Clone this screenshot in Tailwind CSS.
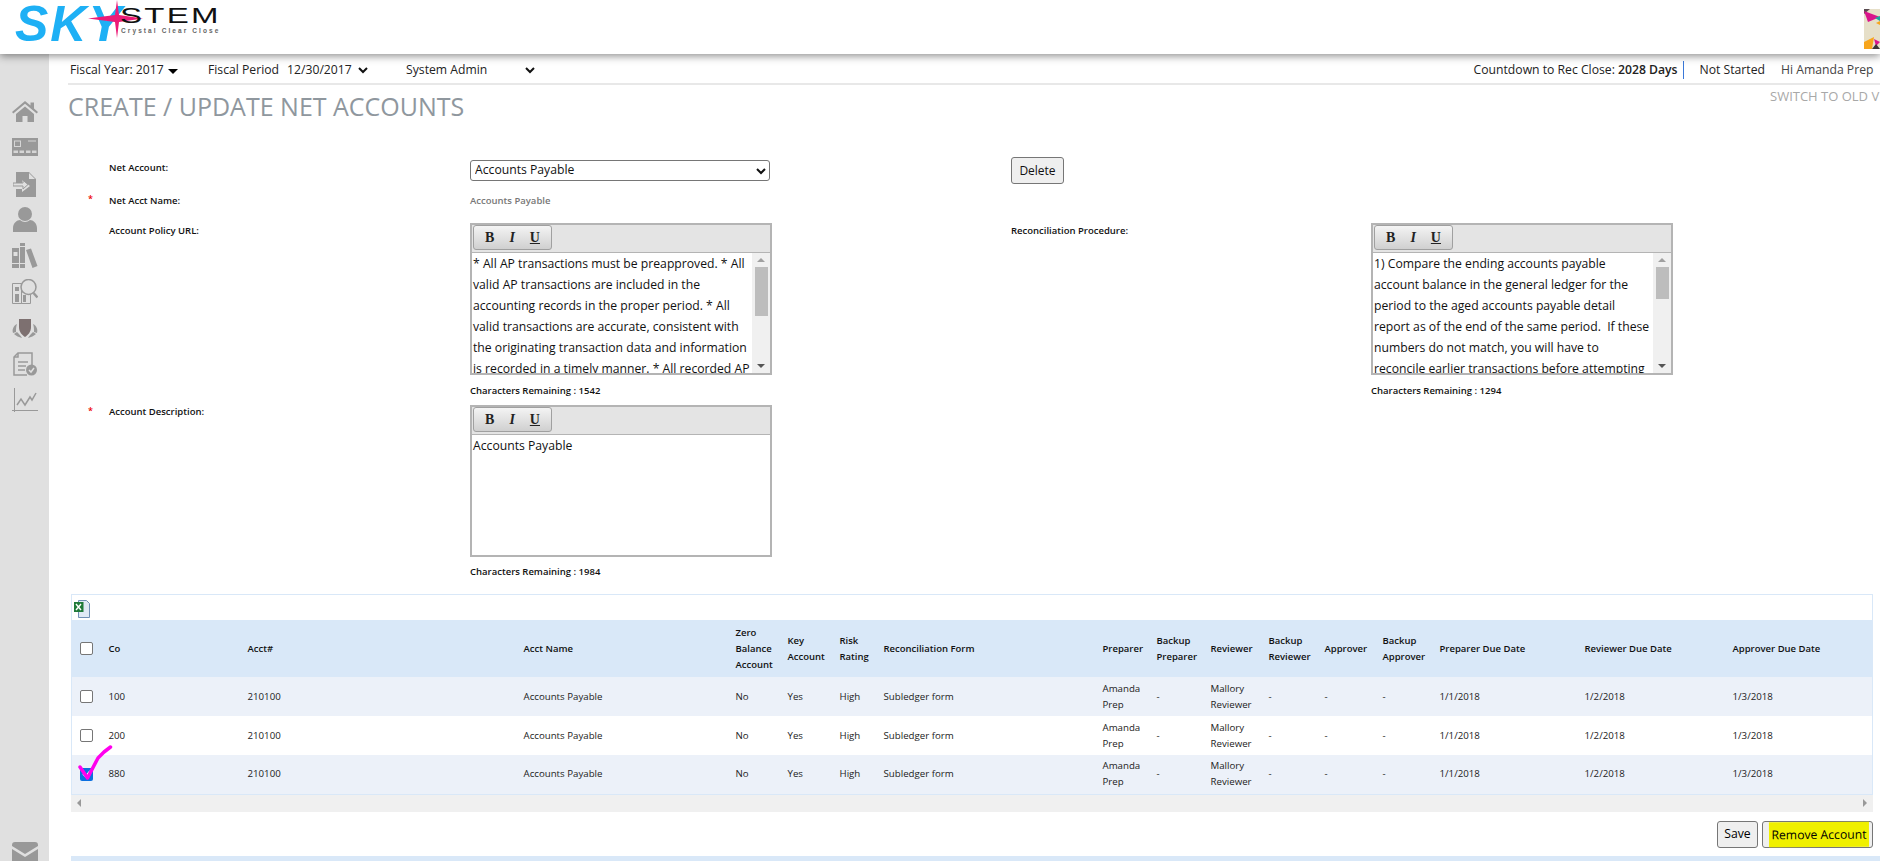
<!DOCTYPE html>
<html lang="en">
<head>
<meta charset="UTF-8">
<title>Create / Update Net Accounts</title>
<script src="https://cdn.jsdelivr.net/npm/@tailwindcss/browser@4"></script>
</head>
<body class="h-[861px] overflow-hidden bg-white font-['Open_Sans',sans-serif] text-black">

<!-- header -->
<header class="relative z-10 flex h-[54px] items-start justify-between bg-white shadow-[0_2px_8px_rgba(0,0,0,0.45)]">
  <div class="relative ml-[15px] mt-[1px] h-[48px] w-[210px]">
    <span class="absolute left-0 top-[-4px] font-['Liberation_Sans',sans-serif] text-[50px] font-bold italic leading-[54px] tracking-[2px] text-[#1eb0f5]">SKY</span>
    <svg class="absolute left-[73px] top-[-1px]" width="56" height="38" viewBox="0 0 56 38"><polygon points="29,0 31,15 55,18.500 31,22 29,38 27,22 0,18.500 27,15" fill="#ec1a78"/><circle cx="29" cy="18.500" r="3.500" fill="#ec1a78"/></svg>
    <span class="absolute left-[105px] top-[5px] origin-left scale-x-[1.5] font-['Liberation_Sans',sans-serif] text-[22px] leading-[20px] tracking-[1.5px] text-[#111]">STEM</span>
    <span class="absolute left-[106px] top-[26px] font-['Liberation_Sans',sans-serif] text-[6.5px] font-bold leading-[8px] tracking-[2.100px] text-[#666]">Crystal Clear Close</span>
  </div>
  <svg class="mt-[9px]" width="16" height="40" viewBox="0 0 16 40"><rect width="16" height="40" fill="#e6dfc8"/><polygon points="0,0 6,0 0,5" fill="#5a4a50"/><polygon points="0,2 16,8 4,13" fill="#d9148c"/><polygon points="11,9 16,7 16,12" fill="#18a8a0"/><polygon points="12,14 16,12 16,16" fill="#f7a51c"/><polygon points="0,40 0,33 10,28 8,40" fill="#f7a51c"/><polygon points="10,30 16,33 12,37" fill="#d9148c"/><polygon points="8,40 12,35 16,40" fill="#3a3436"/></svg>
</header>

<div class="flex h-[807px]">
  <!-- sidebar -->
  <aside class="flex h-[807px] w-[49px] shrink-0 flex-col items-center overflow-hidden bg-[#e0e0e0] pt-[47px] text-[#999]">
    <svg class="shrink-0" width="26" height="21" viewBox="0 0 26 21" fill="currentColor"><path d="M13 0 0 11l1.300 1.500L13 2.800l11.700 9.700L26 11l-4-3.400V1.500h-3.500v3.100zM4 13v8h6.500v-6h5v6H22v-8L13 5.500z"/></svg>
    <svg class="mt-[16px] shrink-0" width="26" height="18" viewBox="0 0 26 18"><rect width="26" height="18" fill="currentColor"/><rect x="2.500" y="3" width="6" height="5.500" fill="none" stroke="#d6d6d6"/><rect x="16" y="2.500" width="8" height="1" fill="#d6d6d6"/><g fill="#d6d6d6"><rect x="1.500" y="12.500" width="4.500" height="2.500"/><rect x="7.500" y="12.500" width="4.500" height="2.500"/><rect x="14" y="12.500" width="4.500" height="2.500"/><rect x="20" y="12.500" width="4.500" height="2.500"/></g></svg>
    <svg class="mt-[16px] shrink-0" width="24" height="25" viewBox="0 0 24 25" fill="currentColor"><path d="M3 0h13l7 7v18H3v-8h6v3l8-6-8-6v3H3zM16 1v6h6z"/><path d="M0 11h10V8l5 4.500-5 4.500v-3H0z" fill="none" stroke="currentColor"/></svg>
    <svg class="mt-[10px] shrink-0" width="24" height="25" viewBox="0 0 24 25" fill="currentColor"><circle cx="12" cy="7" r="7"/><path d="M0 25v-4c0-5 4-8 7-8 3 2.500 7 2.500 10 0 3 0 7 3 7 8v4z"/></svg>
    <svg class="mt-[11px] shrink-0" width="26" height="25" viewBox="0 0 26 25" fill="currentColor"><path d="M0 5h7v20H0zM8 4h5v21H8zM8 0h5v3H8zM14 7l5-1.500L25.500 23l-5 2z"/><rect x="1.500" y="9" width="4" height="4" fill="#e0e0e0"/><path d="M0 20h13v1H0z" fill="#e0e0e0"/></svg>
    <svg class="mt-[11px] shrink-0" width="26" height="25" viewBox="0 0 26 25" fill="none" stroke="currentColor"><path d="M0.500 4.500h9v20H0.500zM9.500 13h9v11.500h-9z"/><path d="M3 8h4v4H3zM3 15h4v8H3zM11 16h3v7h-3z" fill="currentColor" stroke="none"/><circle cx="16.500" cy="8" r="7.500" fill="#e0e0e0" stroke-width="1.500"/><path d="m21.500 14 4 4.500" stroke-width="2.500"/></svg>
    <svg class="mt-[15px] shrink-0" width="26" height="19" viewBox="0 0 26 19" fill="currentColor"><path d="M7 0h12v8c0 5-3 8-6 10-3-2-6-5-6-10z" fill="#7d7070"/><path d="M5 5C1 7 0 11 1 14l3-1c0-3 0-5 1-8zM2 15c2 2 5 3 8 4-1-2-3-4-5-6zM21 5c4 2 5 6 4 9l-3-1c0-3 0-5-1-8zM24 15c-2 2-5 3-8 4 1-2 3-4 5-6z"/></svg>
    <svg class="mt-[14px] shrink-0" width="24" height="24" viewBox="0 0 24 24" fill="none" stroke="currentColor" stroke-width="1.500"><path d="M19 13V1H5L1 5v18h13"/><path d="M5 1v4H1M5 10h10M5 14h8M5 18h7"/><circle cx="18.500" cy="18" r="5.500" fill="currentColor" stroke="none"/><path d="m16 18 2 2 3-4" stroke="#e0e0e0"/></svg>
    <svg class="mt-[12px] shrink-0" width="26" height="25" viewBox="0 0 26 25" fill="none" stroke="currentColor"><path d="M2.500 0v24M0 22.500h26"/><path d="m5 17 4-6 4 6 5-8 2 3 4-7" stroke-width="1.500"/></svg>
    <svg class="mt-[429px] shrink-0" width="26" height="20" viewBox="0 0 26 20" fill="currentColor"><path d="M3 0h20a3 3 0 0 1 3 3v1L13 12 0 4V3a3 3 0 0 1 3-3zM0 7l13 8 13-8v13H0z"/></svg>
  </aside>

  <!-- content -->
  <main class="relative min-w-0 flex-1">
    <!-- top bar -->
    <div class="ml-[19px] flex h-[31px] items-center border-b-2 border-[#e8e8e8] pt-[4px] text-[12.2px] text-[#222]">
      <span class="ml-[2px] w-[138px]">Fiscal Year: 2017 <span class="ml-[1px] inline-block border-x-[5px] border-t-[5px] border-x-transparent border-t-black align-middle"></span></span>
      <span>Fiscal Period</span>
      <span class="ml-[8px] flex w-[120px] items-center">12/30/2017
        <svg class="ml-[6px]" width="10" height="7" viewBox="0 0 10 7" fill="none" stroke="#111" stroke-width="2"><path d="m1 1 4 4 4-4"/></svg>
      </span>
      <span class="ml-[-1px] flex w-[129px] items-center justify-between">System Admin
        <svg width="10" height="7" viewBox="0 0 10 7" fill="none" stroke="#111" stroke-width="2"><path d="m1 1 4 4 4-4"/></svg>
      </span>
      <div class="ml-auto flex items-center">
        <span>Countdown to Rec Close: <b class="font-semibold">2028 Days</b></span>
        <span class="ml-[5px] h-[18px] w-[1px] bg-[#3a78d8]"></span>
        <span class="ml-[16px]">Not Started</span>
        <span class="ml-[16px] mr-[7px] w-[92px] whitespace-nowrap text-[#444]">Hi Amanda Prep</span>
      </div>
    </div>

    <!-- title -->
    <div class="relative h-[45px] pt-[4px]">
      <h1 class="ml-[19px] text-[25px] leading-[34px] text-[#8f979e]">CREATE / UPDATE NET ACCOUNTS</h1>
      <span class="absolute left-[1721px] top-[2px] whitespace-nowrap text-[13px] leading-[18px] text-[#a8a8a8]">SWITCH TO OLD V</span>
    </div>

    <!-- form -->
    <div class="relative ml-[60px] h-[464px] text-[9.5px] font-semibold text-[#111]">
      <div class="flex h-[63px] items-start">
        <label class="mt-[31px] w-[361px]">Net Account:</label>
        <select class="mt-[30px] h-[21px] w-[300px] appearance-none rounded-[3px] border border-[#767676] bg-white pl-[4px] text-[12.2px] font-normal">
          <option>Accounts Payable</option>
        </select>
        <svg class="relative left-[-14px] top-[38px]" width="10" height="7" viewBox="0 0 10 7" fill="none" stroke="#111" stroke-width="2"><path d="m1 1 4 4 4-4"/></svg>
        <button class="ml-[231px] mt-[27px] h-[27px] w-[53px] rounded-[3px] border border-[#767676] bg-[#efefef] text-[12px] font-normal">Delete</button>
      </div>
      <div class="relative flex h-[30px] items-start pt-[1px]">
        <span class="absolute left-[-21px] top-[-1px] text-[9px] text-[#e00]">*</span>
        <label class="w-[361px]">Net Acct Name:</label>
        <span class="text-[#777]">Accounts Payable</span>
      </div>

      <div class="flex h-[182px] items-start">
        <label class="mt-[1px] w-[361px]">Account Policy URL:</label>
        <div class="w-[302px]">
          <div class="h-[152px] overflow-hidden border-2 border-[#b4b4b4] bg-white">
            <div class="flex h-[27px] bg-[#e4e4e4] pl-[1px]">
              <div class="flex h-[25px] w-[79px] items-center justify-between rounded-[3px] border border-[#a0a0a0] bg-gradient-to-b from-[#f4f4f4] to-[#d0d0d0] px-[11px] font-['Liberation_Serif',serif] text-[14px] font-bold text-[#222]">
                <span>B</span><span class="italic">I</span><span class="underline">U</span>
              </div>
            </div>
            <div class="flex h-[121px] border-t border-[#b4b4b4]">
              <p class="w-[280px] shrink-0 overflow-hidden pl-[1px] text-[12.2px] font-normal leading-[21px]">* All AP transactions must be preapproved. * All valid AP transactions are included in the accounting records in the proper period. * All valid transactions are accurate, consistent with the originating transaction data and information is recorded in a timely manner. * All recorded AP</p>
              <div class="flex flex-1 flex-col items-center bg-[#f0f0f0] py-[5px]">
                <span class="border-x-[4px] border-b-[4px] border-x-transparent border-b-[#a0a0a0]"></span>
                <span class="mt-[5px] h-[49px] w-[13px] bg-[#bdbdbd]"></span>
                <span class="mt-auto border-x-[4px] border-t-[4px] border-x-transparent border-t-[#555]"></span>
              </div>
            </div>
          </div>
          <p class="mt-[9px]">Characters Remaining : 1542</p>
        </div>
        <label class="ml-[239px] mt-[1px] w-[360px]">Reconciliation Procedure:</label>
        <div class="w-[302px] shrink-0">
          <div class="h-[152px] overflow-hidden border-2 border-[#b4b4b4] bg-white">
            <div class="flex h-[27px] bg-[#e4e4e4] pl-[1px]">
              <div class="flex h-[25px] w-[79px] items-center justify-between rounded-[3px] border border-[#a0a0a0] bg-gradient-to-b from-[#f4f4f4] to-[#d0d0d0] px-[11px] font-['Liberation_Serif',serif] text-[14px] font-bold text-[#222]">
                <span>B</span><span class="italic">I</span><span class="underline">U</span>
              </div>
            </div>
            <div class="flex h-[121px] border-t border-[#b4b4b4]">
              <p class="w-[280px] shrink-0 overflow-hidden pl-[1px] text-[12.2px] font-normal leading-[21px]">1) Compare the ending accounts payable account balance in the general ledger for the period to the aged accounts payable detail report as of the end of the same period.&nbsp; If these numbers do not match, you will have to reconcile earlier transactions before attempting</p>
              <div class="flex flex-1 flex-col items-center bg-[#f0f0f0] py-[5px]">
                <span class="border-x-[4px] border-b-[4px] border-x-transparent border-b-[#a0a0a0]"></span>
                <span class="mt-[5px] h-[32px] w-[13px] bg-[#bdbdbd]"></span>
                <span class="mt-auto border-x-[4px] border-t-[4px] border-x-transparent border-t-[#555]"></span>
              </div>
            </div>
          </div>
          <p class="mt-[9px]">Characters Remaining : 1294</p>
        </div>
      </div>

      <div class="relative flex items-start">
        <span class="absolute left-[-21px] top-[-1px] text-[9px] text-[#e00]">*</span>
        <label class="w-[361px]">Account Description:</label>
        <div class="w-[302px]">
          <div class="h-[152px] overflow-hidden border-2 border-[#b4b4b4] bg-white">
            <div class="flex h-[27px] bg-[#e4e4e4] pl-[1px]">
              <div class="flex h-[25px] w-[79px] items-center justify-between rounded-[3px] border border-[#a0a0a0] bg-gradient-to-b from-[#f4f4f4] to-[#d0d0d0] px-[11px] font-['Liberation_Serif',serif] text-[14px] font-bold text-[#222]">
                <span>B</span><span class="italic">I</span><span class="underline">U</span>
              </div>
            </div>
            <p class="h-[121px] border-t border-[#b4b4b4] pl-[1px] text-[12.2px] font-normal leading-[21px]">Accounts Payable</p>
          </div>
          <p class="mt-[8px]">Characters Remaining : 1984</p>
        </div>
      </div>
    </div>

    <!-- grid -->
    <div class="relative ml-[22px] w-[1802px]">
      <div class="h-[26px] border border-b-0 border-[#d9e8f8] pl-[2px] pt-[5px]">
        <svg width="16" height="18" viewBox="0 0 16 18"><path d="M4.500 0.500h8l3 3v14h-11z" fill="#dfe9f5" stroke="#6f8fb5"/><rect x="0" y="2" width="9.500" height="10" fill="#1f7a3a"/><path d="m2 4 5 6M7 4l-5 6" stroke="#fff" stroke-width="1.400"/></svg>
      </div>
      <table class="w-[1802px] table-fixed border-x border-b border-[#d9e8f8] text-[9.7px] text-[#222]">
        <colgroup>
          <col class="w-[37px]"><col class="w-[139px]"><col class="w-[276px]"><col class="w-[212px]"><col class="w-[52px]"><col class="w-[52px]"><col class="w-[44px]"><col class="w-[219px]"><col class="w-[54px]"><col class="w-[54px]"><col class="w-[58px]"><col class="w-[56px]"><col class="w-[58px]"><col class="w-[57px]"><col class="w-[145px]"><col class="w-[148px]"><col class="w-[140px]">
        </colgroup>
        <thead class="bg-[#d9e8f8] text-left text-[9.5px] leading-[16px] text-[#111]">
          <tr class="h-[57px]">
            <th class="pl-[8px] font-semibold"><span class="block size-[13px] rounded-[2px] border border-[#767676] bg-white"></span></th>
            <th class="font-semibold">Co</th><th class="font-semibold">Acct#</th><th class="font-semibold">Acct Name</th>
            <th class="font-semibold">Zero Balance Account</th><th class="font-semibold">Key Account</th><th class="font-semibold">Risk Rating</th><th class="font-semibold">Reconciliation Form</th>
            <th class="font-semibold">Preparer</th><th class="font-semibold">Backup Preparer</th><th class="font-semibold">Reviewer</th><th class="font-semibold">Backup Reviewer</th><th class="font-semibold">Approver</th><th class="font-semibold">Backup Approver</th>
            <th class="font-semibold">Preparer Due Date</th><th class="font-semibold">Reviewer Due Date</th><th class="font-semibold">Approver Due Date</th>
          </tr>
        </thead>
        <tbody class="leading-[16px]">
          <tr class="h-[39px] bg-[#ecf1f9]">
            <td class="pl-[8px]"><span class="block size-[13px] rounded-[2px] border border-[#767676] bg-white"></span></td>
            <td>100</td><td>210100</td><td>Accounts Payable</td><td>No</td><td>Yes</td><td>High</td><td>Subledger form</td><td>Amanda Prep</td><td>-</td><td>Mallory Reviewer</td><td>-</td><td>-</td><td>-</td><td>1/1/2018</td><td>1/2/2018</td><td>1/3/2018</td>
          </tr>
          <tr class="h-[39px] bg-white">
            <td class="pl-[8px]"><span class="block size-[13px] rounded-[2px] border border-[#767676] bg-white"></span></td>
            <td>200</td><td>210100</td><td>Accounts Payable</td><td>No</td><td>Yes</td><td>High</td><td>Subledger form</td><td>Amanda Prep</td><td>-</td><td>Mallory Reviewer</td><td>-</td><td>-</td><td>-</td><td>1/1/2018</td><td>1/2/2018</td><td>1/3/2018</td>
          </tr>
          <tr class="h-[39px] bg-[#ecf1f9]">
            <td class="pl-[8px]"><span class="flex size-[13px] items-center justify-center rounded-[2px] bg-[#0b6fe0]"><svg width="9" height="8" viewBox="0 0 9 8" fill="none" stroke="#fff" stroke-width="1.600"><path d="m1 4 2.500 2.500L8 1"/></svg></span></td>
            <td>880</td><td>210100</td><td>Accounts Payable</td><td>No</td><td>Yes</td><td>High</td><td>Subledger form</td><td>Amanda Prep</td><td>-</td><td>Mallory Reviewer</td><td>-</td><td>-</td><td>-</td><td>1/1/2018</td><td>1/2/2018</td><td>1/3/2018</td>
          </tr>
        </tbody>
      </table>
      <div class="flex h-[17px] items-center justify-between bg-[#f0f0f0] px-[6px]">
        <span class="border-y-[4px] border-r-[4px] border-y-transparent border-r-[#999]"></span>
        <span class="border-y-[4px] border-l-[4px] border-y-transparent border-l-[#999]"></span>
      </div>
      <!-- hand drawn tick -->
      <svg class="absolute left-[6px] top-[151px]" width="36" height="36" viewBox="0 0 36 36" fill="none" stroke="#ff00ee" stroke-width="3.500" stroke-linecap="round" stroke-linejoin="round"><path d="m3 22 7.500 11L21 13l6-6 6.500-5"/></svg>
    </div>

    <!-- actions -->
    <div class="ml-[22px] flex h-[44px] w-[1802px] items-start justify-end gap-[4px] pt-[9px] text-[12.2px]">
      <button class="h-[27px] w-[41px] rounded-[3px] border border-[#767676] bg-[#efefef]">Save</button>
      <button class="h-[27px] w-[111px] rounded-[3px] border border-[#767676] bg-[#efefef] pl-[6px] pr-[3px]"><span class="block -rotate-[0.4deg] whitespace-nowrap bg-[#f0f000] leading-[25px]">Remove Account</span></button>
    </div>
    <div class="ml-[22px] h-[5px] w-[1809px] bg-[#d9e8f8]"></div>
  </main>
</div>
</body>
</html>
